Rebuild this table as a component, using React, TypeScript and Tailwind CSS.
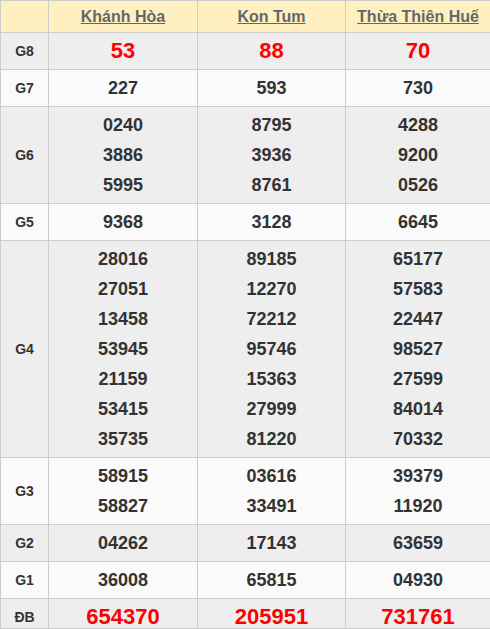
const provinces = ["Khánh Hòa", "Kon Tum", "Thừa Thiên Huế"];

interface PrizeRow {
  label: string;
  values: string[][];
  red?: boolean;
}

const rows: PrizeRow[] = [
  { label: "G8", values: [["53"], ["88"], ["70"]], red: true },
  { label: "G7", values: [["227"], ["593"], ["730"]] },
  {
    label: "G6",
    values: [
      ["0240", "3886", "5995"],
      ["8795", "3936", "8761"],
      ["4288", "9200", "0526"],
    ],
  },
  { label: "G5", values: [["9368"], ["3128"], ["6645"]] },
  {
    label: "G4",
    values: [
      ["28016", "27051", "13458", "53945", "21159", "53415", "35735"],
      ["89185", "12270", "72212", "95746", "15363", "27999", "81220"],
      ["65177", "57583", "22447", "98527", "27599", "84014", "70332"],
    ],
  },
  {
    label: "G3",
    values: [
      ["58915", "58827"],
      ["03616", "33491"],
      ["39379", "11920"],
    ],
  },
  { label: "G2", values: [["04262"], ["17143"], ["63659"]] },
  { label: "G1", values: [["36008"], ["65815"], ["04930"]] },
  { label: "ĐB", values: [["654370"], ["205951"], ["731761"]], red: true },
];

export default function App() {
  return (
    <div
      className="w-[490px] h-[629px] overflow-hidden border-b border-[#cccccc] bg-white"
      style={{ fontFamily: '"Liberation Sans", Arial, sans-serif' }}
    >
      <table className="w-[490px] table-fixed border-collapse">
        <colgroup>
          <col className="w-[48px]" />
          <col className="w-[149px]" />
          <col className="w-[148px]" />
          <col className="w-[145px]" />
        </colgroup>
        <thead>
          <tr className="bg-[#fff0c2]">
            <th className="border border-[#cccccc] h-[32px] p-0"></th>
            {provinces.map((p) => (
              <th
                key={p}
                className="border border-[#cccccc] h-[32px] p-0 text-center text-[16px] font-bold leading-[30px] text-[#666666] underline"
              >
                {p}
              </th>
            ))}
          </tr>
        </thead>
        <tbody>
          {rows.map((row, i) => (
            <tr
              key={row.label}
              className={i % 2 === 0 ? "bg-[#eeeeee]" : "bg-[#fafafa]"}
            >
              <td className="border border-[#cccccc] py-[3px] px-0 text-center text-[14px] font-bold text-[#333333]">
                {row.label}
              </td>
              {row.values.map((vals, j) => (
                <td
                  key={j}
                  className="border border-[#cccccc] py-[3px] px-0 text-center align-middle"
                >
                  {vals.map((v) => (
                    <div
                      key={v}
                      className={
                        row.red
                          ? "leading-[30px] text-[22px] font-bold text-[#ff0000]"
                          : "leading-[30px] text-[18px] font-bold text-[#333333]"
                      }
                    >
                      {v}
                    </div>
                  ))}
                </td>
              ))}
            </tr>
          ))}
        </tbody>
      </table>
    </div>
  );
}
